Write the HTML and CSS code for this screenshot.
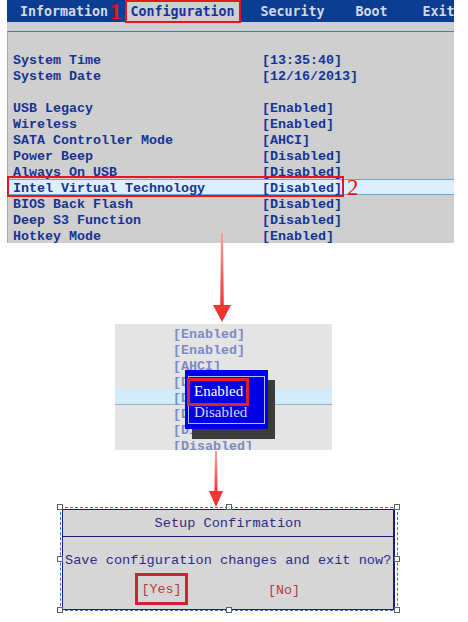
FILE: index.html
```
<!DOCTYPE html>
<html>
<head>
<meta charset="utf-8">
<link rel="stylesheet" href="styles.css">
</head>
<body>
<div class="page">
  <div class="bios">
    <div class="tabs">
      <span class="tab t-info">Information</span>
      <span class="num n1">1</span>
      <span class="tab t-conf">Configuration</span>
      <span class="tab t-sec">Security</span>
      <span class="tab t-boot">Boot</span>
      <span class="tab t-exit">Exit</span>
    </div>
    <div class="panel">
      <div class="row"><span>System Time</span><span>[13:35:40]</span></div>
      <div class="row"><span>System Date</span><span>[12/16/2013]</span></div>
      <div class="row"></div>
      <div class="row"><span>USB Legacy</span><span>[Enabled]</span></div>
      <div class="row"><span>Wireless</span><span>[Enabled]</span></div>
      <div class="row"><span>SATA Controller Mode</span><span>[AHCI]</span></div>
      <div class="row"><span>Power Beep</span><span>[Disabled]</span></div>
      <div class="row"><span>Always On USB</span><span>[Disabled]</span></div>
      <div class="row hl"><span>Intel Virtual Technology</span><span>[Disabled]</span><i class="rbox"></i><span class="num n2">2</span></div>
      <div class="row"><span>BIOS Back Flash</span><span>[Disabled]</span></div>
      <div class="row"><span>Deep S3 Function</span><span>[Disabled]</span></div>
      <div class="row"><span>Hotkey Mode</span><span>[Enabled]</span></div>
    </div>
  </div>

  <svg class="arrow1" width="20" height="91" viewBox="0 0 20 91">
    <defs>
      <linearGradient id="g1" x1="0" y1="0" x2="0" y2="1">
        <stop offset="0" stop-color="#f6a0a0"/>
        <stop offset="1" stop-color="#f03434"/>
      </linearGradient>
    </defs>
    <polygon points="9,0 11,0 11.8,73 8.2,73" fill="url(#g1)"/>
    <polygon points="1,72 19,72 10,89" fill="#f03434"/>
  </svg>

  <div class="mid">
    <div class="mrow">[Enabled]</div>
    <div class="mrow">[Enabled]</div>
    <div class="mrow">[AHCI]</div>
    <div class="mrow">[Disabled]</div>
    <div class="mrow mhl">[Disabled]</div>
    <div class="mrow">[Disabled]</div>
    <div class="mrow">[Disabled]</div>
    <div class="mrow">[Disabled]</div>
    <div class="popup">
      <div class="frame"></div>
      <div class="opt opt-en">Enabled</div>
      <div class="opt opt-dis">Disabled</div>
      <i class="ebox"></i>
    </div>
  </div>

  <svg class="arrow2" width="16" height="57" viewBox="0 0 16 57">
    <defs>
      <linearGradient id="g2" x1="0" y1="0" x2="0" y2="1">
        <stop offset="0" stop-color="#f6a0a0"/>
        <stop offset="1" stop-color="#f03434"/>
      </linearGradient>
    </defs>
    <polygon points="7,1 9,1 9.6,42 6.4,42" fill="url(#g2)"/>
    <polygon points="1,41 15,41 8,57" fill="#f03434"/>
  </svg>

  <div class="sel">
    <div class="dlg">
      <div class="dtitle">Setup Confirmation</div>
      <div class="dmsg">Save configuration changes and exit now?</div>
      <div class="dbtns">
        <span class="btn yes">[Yes]</span>
        <span class="btn no">[No]</span>
      </div>
    </div>
    <i class="h h1"></i><i class="h h2"></i><i class="h h3"></i>
    <i class="h h4"></i><i class="h h5"></i>
    <i class="h h6"></i><i class="h h7"></i><i class="h h8"></i>
  </div>
</div>
</body>
</html>
```

FILE: styles.css
```
* { box-sizing: border-box; }
html, body { margin: 0; padding: 0; background: #ffffff; }
.page { width: 468px; height: 622px; overflow: hidden; }

.bios {
  margin-left: 7px;
  width: 447px;
  height: 243px;
  background: #cfcfcf;
  overflow: hidden;
}
.tabs {
  height: 22px;
  background: #0b3d92;
  display: flex;
  align-items: flex-start;
  white-space: nowrap;
  font-family: "DejaVu Sans Mono", "Liberation Mono", monospace;
  font-weight: bold;
  font-size: 13.3px;
  line-height: 23px;
  color: #d4d9e6;
  overflow: visible;
}
.tab { display: block; height: 22px; }
.t-info { margin-left: 13px; width: 88px; }
.num {
  font-family: "Liberation Serif", serif;
  color: #e8141e;
  font-size: 23px;
  line-height: 23px;
}
.n1 { margin-left: 2px; width: 12px; display: block; }
.t-conf {
  margin-left: 3px;
  width: 116px;
  height: 23px;
  padding: 0 4px;
  border: 2px solid #e8141e;
  background: #cfcfcf;
  color: #15339a;
  line-height: 20px;
  position: relative;
  z-index: 1;
}
.t-sec { margin-left: 20px; }
.t-boot { margin-left: 31px; }
.t-exit { margin-left: 35px; }

.panel {
  margin-top: 9px;
  border-top: 1px solid #3c7bc8;
  border-left: 1px solid #8fb0dc;
  padding-top: 19px;
  font-family: "Liberation Mono", monospace;
  font-weight: bold;
  font-size: 13.33px;
  color: #15339a;
}
.row {
  display: grid;
  grid-template-columns: 249px auto;
  height: 16px;
  line-height: 20px;
  padding-left: 5px;
  white-space: nowrap;
  position: relative;
}
.hl {
  background: #dcefff;
  box-shadow: inset 0 1px 0 #6aa6da, inset 0 -1px 0 #6aa6da;
}
.rbox {
  position: absolute;
  left: -1px;
  top: -3px;
  width: 337px;
  height: 21px;
  border: 2px solid #e8141e;
}
.n2 {
  position: absolute;
  left: 339px;
  top: -2px;
  line-height: 21px;
  font-weight: normal;
}

.arrow1 {
  display: block;
  margin-left: 212px;
  margin-top: -10px;
  position: relative;
}

.mid {
  margin-left: 115px;
  width: 217px;
  height: 126px;
  background: #e4e4e4;
  padding-top: 1px;
  position: relative;
  overflow: hidden;
  font-family: "Liberation Mono", monospace;
  font-weight: bold;
  font-size: 13.33px;
  color: #7b8bc6;
}
.mrow {
  height: 16px;
  line-height: 20px;
  padding-left: 58px;
  white-space: nowrap;
}
.mhl {
  background: #d0ebfa;
  box-shadow: inset 0 -1px 0 #9ab2c6;
}
.popup {
  position: absolute;
  left: 70px;
  top: 46px;
  width: 83px;
  height: 59px;
  background: #0000e6;
  box-shadow: 7px 10px 0 #3c3c3c;
  font-family: "Liberation Serif", serif;
  font-weight: normal;
  font-size: 15px;
}
.frame {
  position: absolute;
  left: 3px;
  top: 6px;
  width: 77px;
  height: 48px;
  border: 1px solid #b4bcff;
}
.opt {
  position: absolute;
  left: 9px;
  line-height: 18px;
  white-space: nowrap;
}
.opt-en { top: 12px; color: #ffffff; }
.opt-dis { top: 33px; color: #d6d8ee; }
.ebox {
  position: absolute;
  left: 2px;
  top: 8px;
  width: 62px;
  height: 28px;
  border: 3px solid #e0202a;
}

.arrow2 {
  display: block;
  margin-left: 208px;
}

.sel {
  margin-left: 60px;
  width: 338px;
  height: 104px;
  border: 1px dashed #2d7ad6;
  position: relative;
}
.dlg {
  margin: 1px 0 0 1px;
  width: 333px;
  height: 101px;
  background: #d6d6d6;
  border: 1px solid #1c1c78;
  border-right-width: 2px;
  font-family: "Liberation Mono", monospace;
  font-size: 13.6px;
  color: #2c2c88;
}
.dtitle {
  height: 27px;
  line-height: 27px;
  text-align: center;
  border-bottom: 1px solid #1c1c78;
}
.dmsg {
  padding-top: 14px;
  padding-left: 2px;
  line-height: 20px;
  white-space: nowrap;
}
.dbtns {
  display: flex;
  margin-top: 2px;
  height: 32px;
}
.btn {
  color: #b83a3a;
  font-size: 13.33px;
  line-height: 30px;
  display: block;
}
.yes {
  margin-left: 72px;
  width: 53px;
  height: 32px;
  border: 3px solid #d42030;
  text-align: center;
  line-height: 28px;
}
.no {
  margin-left: 80px;
  padding-top: 3px;
}
.h {
  position: absolute;
  width: 6px;
  height: 6px;
  background: #ffffff;
  border: 1px solid #606060;
}
.h1 { left: -4px; top: -4px; }
.h2 { left: 165px; top: -4px; }
.h3 { left: 333px; top: -4px; }
.h4 { left: -4px; top: 48px; }
.h5 { left: 333px; top: 48px; }
.h6 { left: -4px; top: 99px; }
.h7 { left: 165px; top: 99px; }
.h8 { left: 333px; top: 99px; }
```
